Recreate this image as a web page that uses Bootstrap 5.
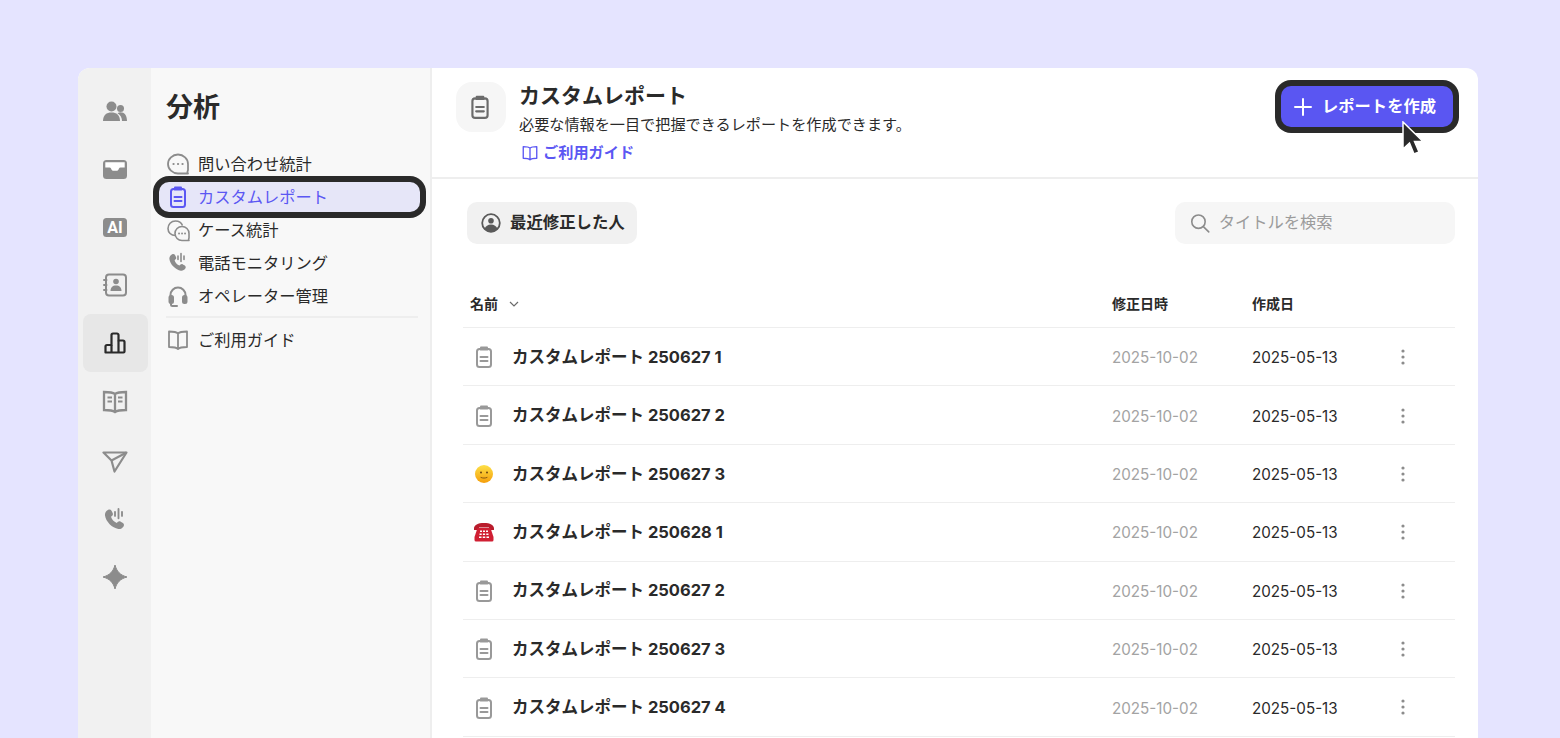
<!DOCTYPE html>
<html lang="ja">
<head>
<meta charset="UTF-8">
<meta name="viewport" content="width=device-width, initial-scale=1.0">
<title>カスタムレポート</title>
<link rel="stylesheet" href="https://cdn.jsdelivr.net/npm/bootstrap@5.3.0/dist/css/bootstrap.min.css">
<style>
    html, body { height: 100%; overflow: hidden; }
    body {
        background: #e5e4ff;
        color: #2a2a2a;
        font-family: Inter, "Noto Sans CJK JP", sans-serif;
        padding: 68px 82px 0 78px;
    }
    .app-window {
        height: 670px;
        background: #fff;
        border-radius: 12px 12px 0 0;
        overflow: hidden;
        position: relative;
    }
    .rail { width: 73px; background: #f1f1f1; padding: 13px 3px 0 5px; flex: none; }
    .rail-item { height: 58.25px; color: #8c8c8c; border-radius: 8px; padding-right: 1px; }
    .rail-item.active { background: #e7e7e7; color: #2a2a2a; }
    .rail-item .down-1 { margin-top: 2px; }
    .rail-item .down-2 { margin-top: 4px; }
    .subnav { width: 281px; background: #f8f8f8; border-right: 2px solid #eeeeee; padding: 0 10px 0 7px; flex: none; }
    .subnav-title { font-size: 27px; font-weight: 700; line-height: 40px; margin: 20px 0 21px 8px; }
    .subnav-item { height: 30px; gap: 8px; padding-left: 8px; margin-bottom: 3px; font-size: 16.25px; color: #2a2a2a; border-radius: 10px; position: relative; }
    .subnav-item svg { color: #8c8c8c; flex: none; }
    .subnav-item.active { background: #e6e6f8; color: #5b57f3; box-shadow: 0 0 0 6px #2a2a2a; margin: 3px 0 3px 1px; padding-left: 7px; }
    .subnav-item.active svg { color: #5b57f3; }
    .subnav-rule { height: 2px; background: #eeeeee; margin: 5px 0 7px 8px; width: 252px; }
    .page-head { height: 111px; border-bottom: 2px solid #eeeeee; padding: 14px 25px 0 24px; }
    .head-icon { width: 50px; height: 50px; background: #f6f6f6; border-radius: 16px; color: #6b6b6b; flex: none; padding-right: 2px; }
    .head-body { margin-left: 5px; }
    .head-title { font-size: 21px; font-weight: 700; line-height: 28px; }
    .head-desc { font-size: 15.15px; line-height: 22px; margin-top: 4px; }
    .head-link { font-size: 15.2px; font-weight: 700; color: #5b57f3; line-height: 22px; margin: 6px 0 0 2px; gap: 4px; }
    .create-btn {
        width: 172px; height: 41px; margin-top: 4px;
        background: #5a56f2; color: #fff; border: 0; border-radius: 10px;
        box-shadow: 0 0 0 6px #2a2a2a;
        font-size: 16.3px; font-weight: 700; padding: 0 0 0 12px; gap: 9px;
    }
    .create-btn:hover { background: #5a56f2; color: #fff; }
    .toolbar { padding: 23px 23px 0 35px; }
    .recent-chip { height: 42px; width: 170px; background: #f1f1f1; border-radius: 10px; padding: 0 0 2px 14px; gap: 9px; font-size: 16.4px; font-weight: 700; color: #2a2a2a; }
    .recent-chip svg { margin-top: 2px; }
    .title-search { width: 280px; height: 42px; background: #f6f6f6; border-radius: 10px; padding: 0 0 0 15px; gap: 9px; color: #8c8c8c; }
    .title-search input { border: 0; background: transparent; padding: 0 0 2px; font-size: 16.3px; box-shadow: none; }
    .title-search input::placeholder { color: #9c9c9c; }
    .report-table { margin: 32.5px 23px 0 31px; width: 992px; table-layout: fixed; }
    .report-table > :not(caption) > * > * { padding: 0; border-color: #eeeeee; border-bottom-width: 1.5px; color: #2a2a2a; box-shadow: none; background: transparent; }
    .report-table > thead > tr > th { height: 51px; font-size: 14px; font-weight: 700; padding: 3px 0 0 8px; vertical-align: middle; }
    .report-table > tbody > tr > td { height: 58.4px; vertical-align: middle; padding: 4px 0 0 8px; font-size: 15.2px; }
    .report-table > thead > tr > th.name-col { padding-left: 7px; }
    .report-table > tbody > tr > td.name-cell { padding: 1px 0 0 9px; }
    .name-wrap { gap: 16px; font-size: 16.5px; font-weight: 700; }
    .name-wrap svg { flex: none; color: #999999; }
    .report-table > tbody > tr > td.modified { color: #a3a3a3; }
    .report-table > tbody > tr > td.menu-dots { color: #8c8c8c; padding: 0 0 0 6px; }
    .cursor-arrow { position: absolute; left: 1323px; top: 53px; }
</style>
</head>
<body>
<svg width="0" height="0" class="d-none">
    <symbol id="i-clip" viewBox="0 0 24 24" fill="none" stroke="currentColor" stroke-width="2">
        <rect x="5" y="4" width="14" height="18" rx="2.5"/>
        <path d="M9 2.6h6M8.5 4.5h7M8.5 12h7M8.5 16h7" stroke-linecap="round"/>
    </symbol>
    <symbol id="i-book" viewBox="0 0 24 24" fill="none" stroke="currentColor" stroke-width="1.8">
        <path d="M12 5.5C10.5 4 8 3.5 3 3.5v15.5c5 0 7.5.5 9 2 1.5-1.5 4-2 9-2V3.5c-5 0-7.5.5-9 2Zm0 0V21" stroke-linejoin="round"/>
    </symbol>
    <symbol id="i-phone" viewBox="0 0 24 24" fill="currentColor">
        <path d="M6.200 3.200c1.100-.6 2.200-.3 2.800.8l1 1.900c.4.900.3 1.700-.4 2.400l-1 1c.7 2.400 2.400 4.300 4.900 5.300l1-1c.7-.6 1.600-.7 2.400-.2l1.900 1.200c1 .7 1.200 1.900.5 2.900-1 1.500-2.600 2.400-4.400 2.200C9.700 19 4 13.400 3.400 8 3.200 6 4.300 4.200 6.200 3.200Z"/>
        <path d="M15 2.500v8M12 5v3.500M18 5v3.500" stroke="currentColor" stroke-width="1.600" stroke-linecap="round"/>
    </symbol>
</svg>

<div class="app-window d-flex">
    <!-- icon rail -->
    <div class="rail">
        <div class="rail-item d-flex align-items-center justify-content-center">
            <svg class="down-1" width="26" height="20" viewBox="0 0 26 20" fill="currentColor"><circle cx="9.500" cy="5.500" r="5"/><circle cx="18.500" cy="7.500" r="3.500"/><path d="M1 20c0-6 3.500-8.500 8.500-8.500S18 14 18 20Z"/><path d="M15.500 12.200c1-.7 2-1 3-1 4 0 6.500 3 6.500 8.800h-5c0-3.200-1.500-6-4.500-7.800Z"/></svg>
        </div>
        <div class="rail-item d-flex align-items-center justify-content-center">
            <svg class="down-1" width="24" height="19" viewBox="0 0 24 19" fill="currentColor"><rect width="24" height="19" rx="3.500"/><path d="M2.300 2.300h19.400v5.200h-4.200c-.8 0-1.200.4-1.500 1l-.6 1.200c-.3.700-.8 1-1.500 1H10.100c-.7 0-1.200-.3-1.500-1L8 8.500c-.3-.6-.7-1-1.500-1H2.300Z" fill="#fff"/></svg>
        </div>
        <div class="rail-item d-flex align-items-center justify-content-center">
            <svg class="down-1" width="24" height="19" viewBox="0 0 24 19"><rect width="24" height="19" rx="3.500" fill="currentColor"/><text x="12" y="15" text-anchor="middle" font-family="Roboto, sans-serif" font-size="16" font-weight="700" fill="#fff">AI</text></svg>
        </div>
        <div class="rail-item d-flex align-items-center justify-content-center">
            <svg width="24" height="24" viewBox="0 0 24 24" fill="none" stroke="currentColor" stroke-width="2"><rect x="3" y="1.500" width="20" height="21" rx="3"/><path d="M1 7h2.500M1 12h2.500M1 17h2.500" stroke-linecap="round"/><circle cx="13" cy="8.500" r="2.800" fill="currentColor" stroke="none"/><path d="M7.500 18c0-3.500 2-5.500 5.500-5.500s5.500 2 5.500 5.500Z" fill="currentColor" stroke="none"/></svg>
        </div>
        <div class="rail-item active d-flex align-items-center justify-content-center">
            <svg width="24" height="24" viewBox="0 0 24 24" fill="none" stroke="currentColor" stroke-width="2.200" stroke-linejoin="round"><path d="M2.500 21.500v-6a1.500 1.500 0 0 1 1.500-1.500h4.500V4a1.500 1.500 0 0 1 1.500-1.500h4A1.500 1.500 0 0 1 15.500 4v5.500H20a1.500 1.500 0 0 1 1.500 1.500v9.500a1 1 0 0 1-1 1H3.500a1 1 0 0 1-1-1Z"/><path d="M8.500 14v7.500M15.500 9.500v12"/></svg>
        </div>
        <div class="rail-item d-flex align-items-center justify-content-center">
            <svg class="down-1" width="26" height="24" viewBox="0 0 26 24" fill="none" stroke="currentColor" stroke-width="2.300"><path d="M13 4C11 2.500 8 2 2 2v18c6 0 9 .5 11 2 2-1.500 5-2 11-2V2c-6 0-9 .5-11 2Zm0 0v18"/><path d="M5.500 7.500h4.500M5.500 11.500h4.500M16 7.500h4.500M16 11.500h4.500" stroke-width="2"/></svg>
        </div>
        <div class="rail-item d-flex align-items-center justify-content-center">
            <svg class="down-2" width="26" height="22" viewBox="0 0 26 22" fill="none" stroke="currentColor" stroke-width="2.200" stroke-linejoin="round"><path d="M1.500 1.500h23L12.500 20.500 9.500 9.500Z"/><path d="M9.500 9.500 24.500 1.500"/></svg>
        </div>
        <div class="rail-item d-flex align-items-center justify-content-center">
            <svg class="down-2" width="28" height="28"><use href="#i-phone"/></svg>
        </div>
        <div class="rail-item d-flex align-items-center justify-content-center">
            <svg class="down-1" width="24" height="24" viewBox="0 0 24 24" fill="currentColor"><path d="M12 0c1.700 6.300 4.800 10 12 12-7.200 2-10.300 5.700-12 12-1.700-6.300-4.800-10-12-12 7.200-2 10.300-5.700 12-12Z" stroke="currentColor" stroke-width="1" stroke-linejoin="round"/></svg>
        </div>
    </div>

    <!-- section menu -->
    <div class="subnav">
        <div class="subnav-title">分析</div>
        <div class="subnav-item d-flex align-items-center">
            <svg width="24" height="24" viewBox="0 0 24 24" fill="none" stroke="currentColor" stroke-width="1.800"><path d="M22 12a10 9.500 0 1 0-10 9.500h10c-.8-1-.8-2 0-3.500Z" stroke-linejoin="round"/><path d="M7.500 12h.1M12 12h.1M16.500 12h.1" stroke-width="2.200" stroke-linecap="round"/></svg>
            <span>問い合わせ統計</span>
        </div>
        <div class="subnav-item active d-flex align-items-center">
            <svg width="24" height="24"><use href="#i-clip"/></svg>
            <span>カスタムレポート</span>
        </div>
        <div class="subnav-item d-flex align-items-center">
            <svg width="24" height="24" viewBox="0 0 24 24" fill="none" stroke="currentColor" stroke-width="1.600"><path d="M9.500 17.500C5 17.500 2 14.500 2 10.500S5 3 9.500 3c3.500 0 6 2 7 4.500"/><path d="M23 15.500a7 7 0 1 0-7 7h7c-.6-.8-.6-1.500 0-2.500Z" stroke-linejoin="round"/><path d="M13 15.500h.1M16 15.500h.1M19 15.500h.1" stroke-width="1.800" stroke-linecap="round"/></svg>
            <span>ケース統計</span>
        </div>
        <div class="subnav-item d-flex align-items-center">
            <svg width="24" height="24"><use href="#i-phone"/></svg>
            <span>電話モニタリング</span>
        </div>
        <div class="subnav-item d-flex align-items-center">
            <svg width="24" height="24" viewBox="0 0 24 24" fill="none" stroke="currentColor" stroke-width="2"><path d="M4.500 14v-3a7.500 7.500 0 0 1 15 0v3"/><rect x="3.500" y="12" width="3.500" height="7" rx="1.500" fill="currentColor"/><rect x="17" y="12" width="3.500" height="7" rx="1.500" fill="currentColor"/><path d="M5 19v1.500a1.500 1.500 0 0 0 1.500 1.500H11" stroke-linecap="round"/></svg>
            <span>オペレーター管理</span>
        </div>
        <div class="subnav-rule"></div>
        <div class="subnav-item d-flex align-items-center">
            <svg width="24" height="24"><use href="#i-book"/></svg>
            <span>ご利用ガイド</span>
        </div>
    </div>

    <!-- main -->
    <div class="flex-grow-1">
        <div class="page-head d-flex justify-content-between">
            <div class="d-flex gap-2">
                <div class="head-icon d-flex align-items-center justify-content-center">
                    <svg width="26" height="26"><use href="#i-clip"/></svg>
                </div>
                <div class="head-body">
                    <div class="head-title">カスタムレポート</div>
                    <div class="head-desc">必要な情報を一目で把握できるレポートを作成できます。</div>
                    <div class="head-link d-flex align-items-center">
                        <svg width="18" height="18"><use href="#i-book"/></svg>
                        <span>ご利用ガイド</span>
                    </div>
                </div>
            </div>
            <button type="button" class="btn create-btn d-flex align-items-center">
                <svg width="20" height="20" viewBox="0 0 20 20" stroke="currentColor" stroke-width="2" stroke-linecap="round"><path d="M10 2v16M2 10h16"/></svg>
                <span>レポートを作成</span>
            </button>
        </div>

        <div class="toolbar d-flex justify-content-between">
            <div class="recent-chip d-flex align-items-center">
                <svg width="20" height="20" viewBox="0 0 20 20" fill="none" stroke="#5a5a5a" stroke-width="1.800"><circle cx="10" cy="10" r="8.800"/><circle cx="10" cy="7.800" r="2.800" fill="#5a5a5a" stroke="none"/><path d="M3.500 16c1-3 3.500-4.500 6.500-4.500s5.500 1.500 6.500 4.500c-3 3.500-10 3.500-13 0Z" fill="#5a5a5a" stroke="none"/></svg>
                <span>最近修正した人</span>
            </div>
            <div class="title-search d-flex align-items-center">
                <svg class="flex-none" width="22" height="22" viewBox="0 0 22 22" fill="none" stroke="currentColor" stroke-width="1.800" stroke-linecap="round"><circle cx="9.500" cy="9.500" r="7.500"/><path d="m15 15 6 6"/></svg>
                <input type="text" class="form-control" placeholder="タイトルを検索">
            </div>
        </div>

        <table class="table report-table" id="reportTable">
            <colgroup><col style="width: 641px"><col style="width: 140px"><col style="width: 151px"><col style="width: 60px"></colgroup>
            <thead>
                <tr>
                    <th class="name-col">名前 <svg class="ms-2" width="10" height="7" viewBox="0 0 10 7" fill="none" stroke="#6b6b6b" stroke-width="1.200"><path d="m1 1 4 4 4-4"/></svg></th>
                    <th>修正日時</th>
                    <th>作成日</th>
                    <th></th>
                </tr>
            </thead>
            <tbody></tbody>
        </table>

        <svg class="cursor-arrow" width="24" height="36" viewBox="0 0 24 36"><path d="M2 1v27l6.500-6 4.500 11 5-2-4.500-10.500H22Z" fill="#2a2a2a" stroke="#fff" stroke-width="1.500"/></svg>
    </div>
</div>

<script>
    const clipIcon = '<svg width="24" height="24"><use href="#i-clip"/></svg>';
    const smile = '<svg width="24" height="24" viewBox="0 0 24 24"><defs><linearGradient id="sm" x1="0" y1="0" x2="0" y2="1"><stop offset="0" stop-color="#fde047"/><stop offset="1" stop-color="#f59e0b"/></linearGradient></defs><circle cx="12" cy="12" r="9" fill="url(#sm)"/><circle cx="9" cy="10.500" r="1" fill="#6b4410"/><circle cx="15" cy="10.500" r="1" fill="#6b4410"/><path d="M9 15.500c2 .8 4 .8 6 0" stroke="#6b4410" stroke-width=".8" fill="none" stroke-linecap="round"/></svg>';
    const telephone = '<svg width="24" height="24" viewBox="0 0 24 24"><path d="M2 8.500C2 5 6 3 12 3s10 2 10 5.500V10h-5V7.500H7V10H2Z" fill="#b91c2c"/><path d="M5.500 8h13l3 9v3a1.500 1.500 0 0 1-1.500 1.500H4A1.500 1.500 0 0 1 2.500 20v-3Z" fill="#d01f33"/><path d="M8 10.500h2V12H8zM11 10.500h2V12h-2zM14 10.500h2V12h-2zM7.500 13.500h2.200V15H7.500zM10.900 13.500h2.200V15h-2.200zM14.300 13.500h2.200V15h-2.200zM7 16.500h2.500V18H7zM10.750 16.500h2.500V18h-2.500zM14.500 16.500H17V18h-2.500z" fill="#fff"/></svg>';
    const reports = [
        [clipIcon, 'カスタムレポート 250627 1'],
        [clipIcon, 'カスタムレポート 250627 2'],
        [smile, 'カスタムレポート 250627 3'],
        [telephone, 'カスタムレポート 250628 1'],
        [clipIcon, 'カスタムレポート 250627 2'],
        [clipIcon, 'カスタムレポート 250627 3'],
        [clipIcon, 'カスタムレポート 250627 4']
    ];
    const dots = '<svg width="4" height="16" viewBox="0 0 4 16" fill="currentColor"><circle cx="2" cy="2" r="1.600"/><circle cx="2" cy="8" r="1.600"/><circle cx="2" cy="14" r="1.600"/></svg>';
    let rows = '';
    reports.forEach(r => {
        rows += `<tr>
            <td class="name-cell"><div class="name-wrap d-flex align-items-center">${r[0]}<span>${r[1]}</span></div></td>
            <td class="modified">2025-10-02</td>
            <td>2025-05-13</td>
            <td class="menu-dots">${dots}</td>
        </tr>`;
    });
    document.querySelector('#reportTable tbody').innerHTML = rows;
</script>
</body>
</html>
